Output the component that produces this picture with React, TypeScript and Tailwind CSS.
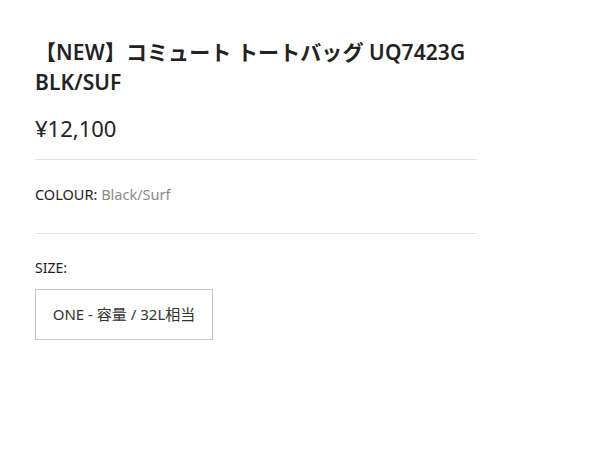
import React from "react";

const font = {
  fontFamily: '"Noto Sans", "Noto Sans CJK JP", sans-serif',
};

function ProductInfo() {
  return (
    <div className="w-[477px] pl-[35px] pt-[37px] text-[#222]" style={font}>
      {/* title */}
      <h1 className="text-[21px] font-semibold leading-[30px] tracking-[0.1px]">
        【NEW】コミュート トートバッグ UQ7423G
        <br />
        BLK/SUF
      </h1>

      {/* price */}
      <div className="mt-[15px] pb-[15px] text-[22px] leading-[32px] border-b border-[#e3e3e3]">
        ¥12,100
      </div>

      {/* colour */}
      <div className="pt-[24px] pb-[29px] text-[14.5px] leading-[20px] border-b border-[#e3e3e3]">
        <span className="text-[#222]">COLOUR:</span>{" "}
        <span className="text-[#8a8a8a]">Black/Surf</span>
      </div>

      {/* size */}
      <div className="pt-[24px]">
        <div className="text-[14px] leading-[20px]">SIZE:</div>
        <button className="mt-[11px] w-[178px] h-[51px] border border-[#c4c4c4] text-[15px] text-[#333] flex items-center justify-center">
          ONE - 容量 / 32L相当
        </button>
      </div>
    </div>
  );
}

export default function App() {
  return (
    <div className="w-[600px] h-[450px] bg-white">
      <ProductInfo />
    </div>
  );
}
